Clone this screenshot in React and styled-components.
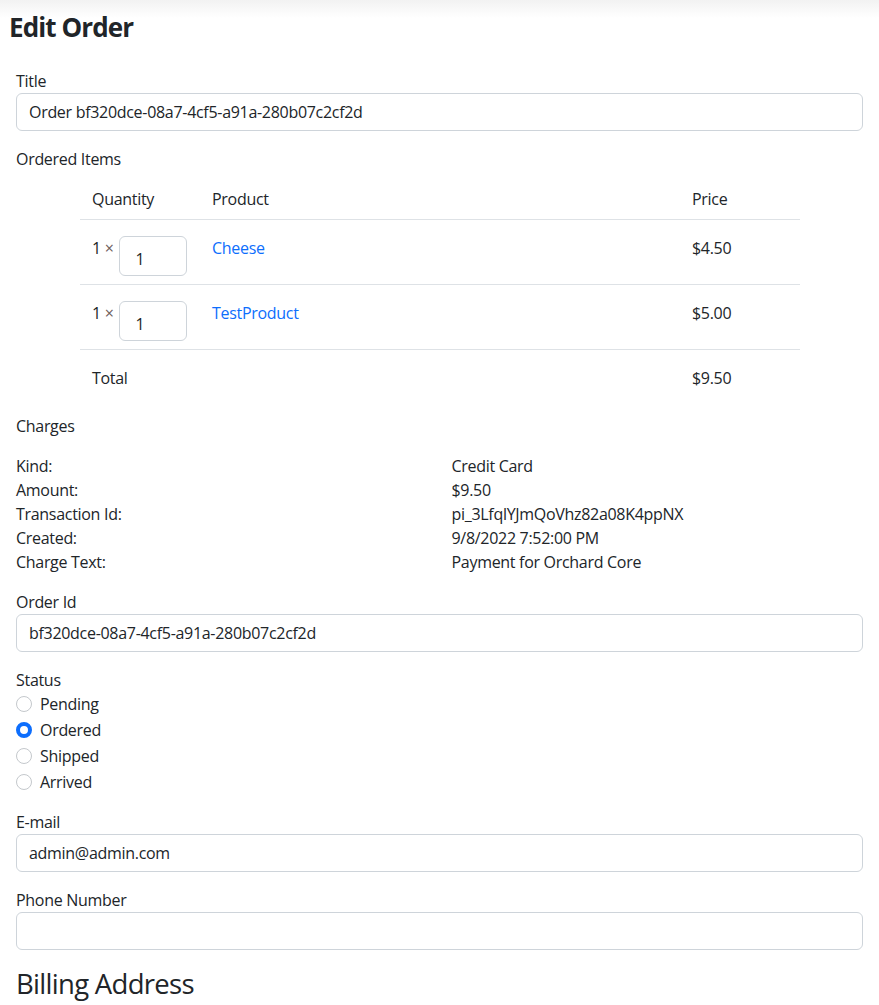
import styled, { createGlobalStyle } from 'styled-components'

const GlobalStyle = createGlobalStyle`
  body {
    margin: 0;
    background: #fff;
    color: #212529;
    font-family: 'Open Sans', 'Noto Sans', sans-serif;
    font-size: 16px;
    line-height: 1.5;
    letter-spacing: -0.3px;
  }
  * {
    box-sizing: border-box;
  }
`

const items = [
  { qty: 1, name: 'Cheese', price: '$4.50' },
  { qty: 1, name: 'TestProduct', price: '$5.00' },
]

const charges = [
  ['Kind:', 'Credit Card'],
  ['Amount:', '$9.50'],
  ['Transaction Id:', 'pi_3LfqlYJmQoVhz82a08K4ppNX'],
  ['Created:', '9/8/2022 7:52:00 PM'],
  ['Charge Text:', 'Payment for Orchard Core'],
]

const statuses = ['Pending', 'Ordered', 'Shipped', 'Arrived']

const App = () => {
  return (
    <Page>
      <GlobalStyle />
      <Header>
        <h1>Edit Order</h1>
      </Header>
      <Form>
        <Group>
          <Label>Title</Label>
          <Input defaultValue='Order bf320dce-08a7-4cf5-a91a-280b07c2cf2d' />
        </Group>

        <Group>
          <Label>Ordered Items</Label>
          <Table>
            <thead>
              <tr>
                <Th $w='120px'>Quantity</Th>
                <Th>Product</Th>
                <Th $w='120px'>Price</Th>
              </tr>
            </thead>
            <tbody>
              {items.map((item) => (
                <tr key={item.name}>
                  <Td>
                    <Qty>
                      <span>
                        {item.qty} <Times>×</Times>
                      </span>
                      <QtyInput defaultValue={item.qty} />
                    </Qty>
                  </Td>
                  <Td>
                    <Link href='#'>{item.name}</Link>
                  </Td>
                  <Td>{item.price}</Td>
                </tr>
              ))}
              <tr>
                <Td $last>Total</Td>
                <Td $last />
                <Td $last>$9.50</Td>
              </tr>
            </tbody>
          </Table>
        </Group>

        <Group>
          <Label>Charges</Label>
          <Charges>
            {charges.map(([k, v]) => (
              <Row key={k}>
                <span>{k}</span>
                <span>{v}</span>
              </Row>
            ))}
          </Charges>
        </Group>

        <Group>
          <Label>Order Id</Label>
          <Input defaultValue='bf320dce-08a7-4cf5-a91a-280b07c2cf2d' />
        </Group>

        <Group>
          <Label>Status</Label>
          {statuses.map((s) => (
            <Check key={s}>
              <Radio type='radio' name='status' defaultChecked={s === 'Ordered'} />
              <span>{s}</span>
            </Check>
          ))}
        </Group>

        <Group>
          <Label>E-mail</Label>
          <Input defaultValue='admin@admin.com' />
        </Group>

        <Group>
          <Label>Phone Number</Label>
          <Input defaultValue='' />
        </Group>

        <SubTitle>Billing Address</SubTitle>
      </Form>
    </Page>
  )
}

const Page = styled.div`
  min-height: 1005px;
`

const Header = styled.div`
  background: linear-gradient(to bottom, #f2f2f2 0px, #ffffff 18px);
  padding: 10px 9px 0;
  h1 {
    margin: 0;
    font-size: 26px;
    font-weight: 700;
    line-height: 34px;
    letter-spacing: -0.9px;
  }
`

const Form = styled.div`
  padding: 25px 16px 0;
`

const Group = styled.div`
  margin-bottom: 16px;
`

const Label = styled.div`
  line-height: 24px;
`

const Input = styled.input`
  display: block;
  width: 100%;
  height: 38px;
  padding: 6px 12px;
  font: inherit;
  letter-spacing: inherit;
  color: #212529;
  border: 1px solid #ced4da;
  border-radius: 6px;
  background: #fff;
  outline: none;
`

const Table = styled.table`
  width: 720px;
  margin: 8px 0 0 64px;
  border-collapse: collapse;
`

const Th = styled.th`
  text-align: left;
  font-weight: 400;
  padding: 8px 12px;
  width: ${(p) => p.$w || 'auto'};
  border-bottom: 1px solid #dee2e6;
`

const Td = styled.td`
  vertical-align: top;
  padding: 16px 12px 8px;
  border-bottom: ${(p) => (p.$last ? 'none' : '1px solid #dee2e6')};
`

const Qty = styled.div`
  display: flex;
  align-items: flex-start;
  gap: 5px;
  span {
    white-space: nowrap;
  }
`

const Times = styled.i`
  font-style: normal;
  color: #6c5a5a;
`

const QtyInput = styled(Input)`
  width: 68px;
  height: 40px;
  padding: 10px 16px 4px;
`

const Link = styled.a`
  color: #0d6efd;
  text-decoration: none;
`

const Charges = styled.div`
  margin-top: 16px;
`

const Row = styled.div`
  display: grid;
  grid-template-columns: 1fr 1fr;
  column-gap: 24px;
  line-height: 24px;
`

const Check = styled.label`
  display: flex;
  align-items: center;
  gap: 8px;
  min-height: 24px;
  margin-bottom: 2px;
`

const Radio = styled.input`
  appearance: none;
  margin: 0;
  width: 16px;
  height: 16px;
  border-radius: 50%;
  border: 1px solid #c4c8cc;
  background: #fff;
  &:checked {
    border: 4.5px solid #0d6efd;
    background: #fff;
  }
`

const SubTitle = styled.h2`
  margin: 0;
  font-size: 27.5px;
  font-weight: 500;
  line-height: 35px;
  letter-spacing: -0.7px;
`

export default App
